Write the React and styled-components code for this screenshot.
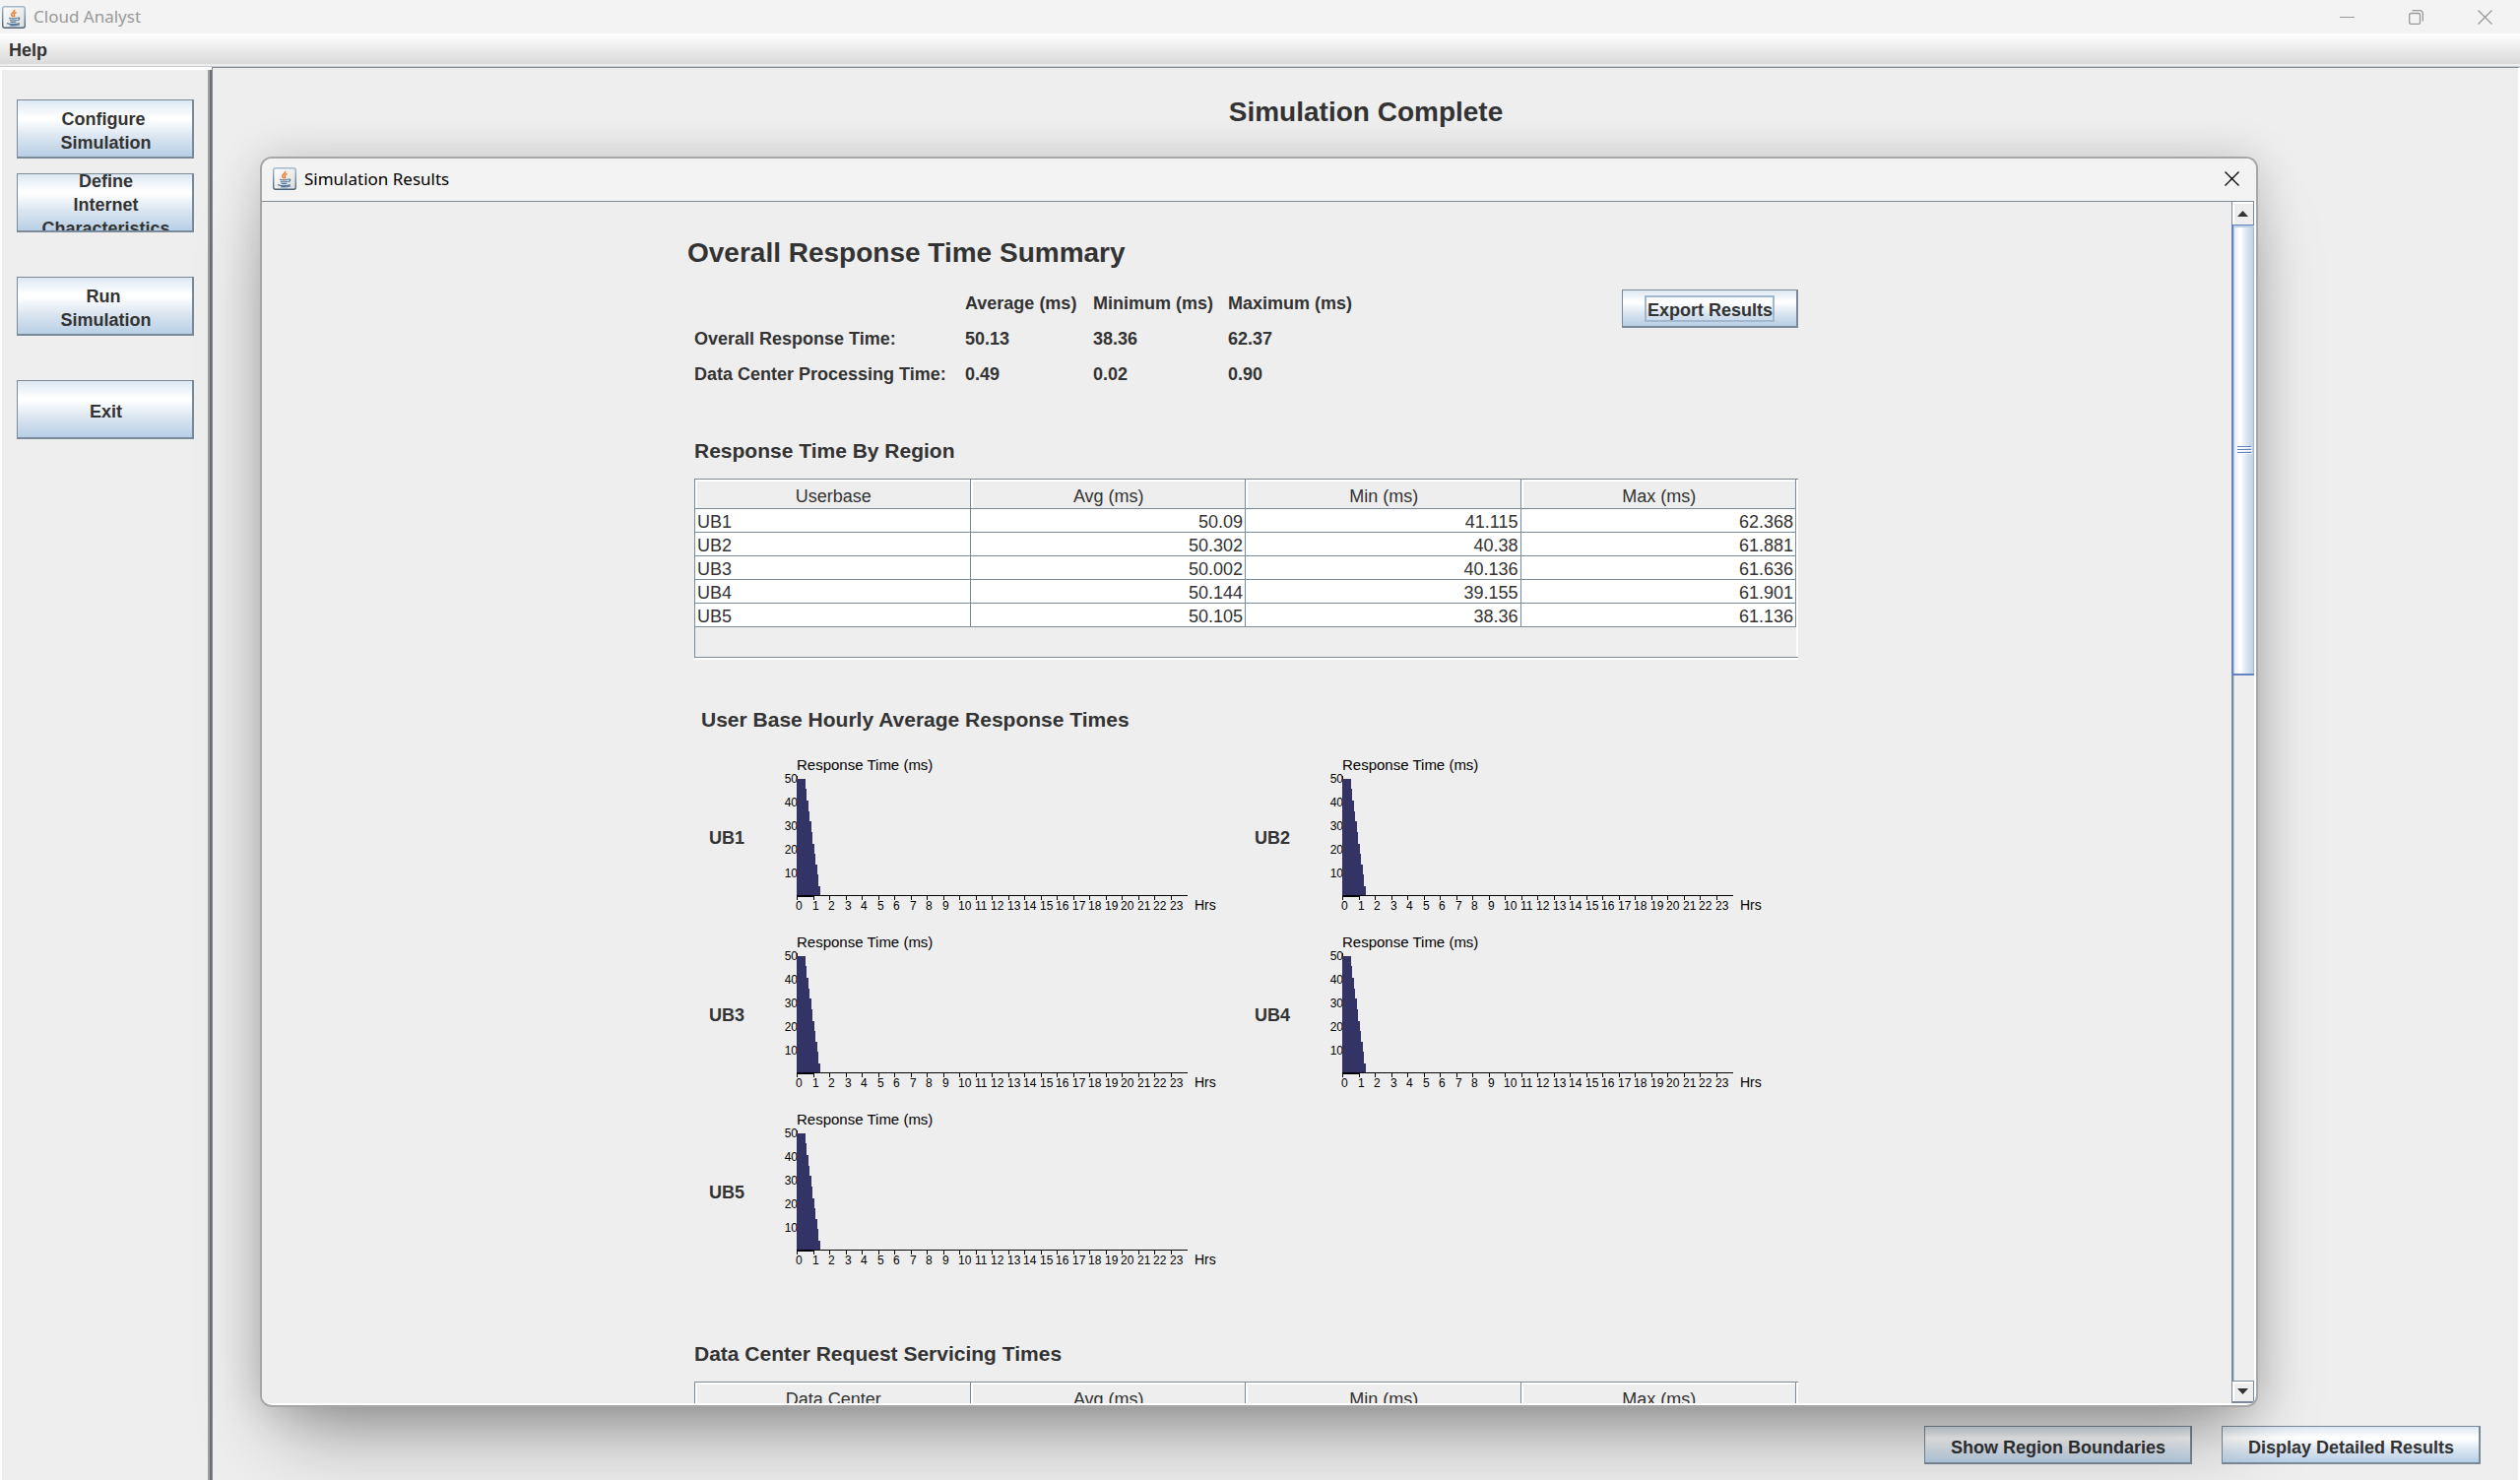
import React from "react";
import styled, { createGlobalStyle } from "styled-components";

const LINE = "#7a8a99";
const FACE = "#eeeeee";
const INK = "#333333";
const steel = (dir) =>
  `linear-gradient(${dir}, #dde8f3 0%, #ffffff 30%, #ffffff 34%, #dbe6f1 64%, #b8cfe5 100%)`;

const GlobalStyle = createGlobalStyle`
  *, *::before, *::after { box-sizing: border-box; }
  body {
    margin: 0;
    background: ${FACE};
    color: ${INK};
    font: bold 18px/24px "Liberation Sans", Arial, sans-serif;
  }
  button { font: inherit; color: inherit; }
`;

const Frame = styled.div`
  height: 100vh;
  display: flex;
  flex-direction: column;
  overflow: hidden;
`;

const TitleBar = styled.header`
  height: ${(p) => p.$height}px;
  flex: none;
  display: flex;
  align-items: center;
  gap: 8px;
  padding: ${(p) => p.$padding};
  background: #f3f3f3;
  color: ${(p) => p.$color};
  font: 17px/24px "Noto Sans", "Open Sans", sans-serif;
`;

const TitleText = styled.span`
  flex: 1;
`;

const WindowControls = styled.div`
  display: flex;
  align-self: stretch;
`;

const ControlButton = styled.button`
  width: ${(p) => p.$width}px;
  padding: 0;
  border: 0;
  background: none;
  display: flex;
  align-items: center;
  justify-content: center;
`;

const MenuBar = styled.nav`
  height: 34px;
  flex: none;
  display: flex;
  border-bottom: 1px solid #cccccc;
  background: linear-gradient(#ffffff, #dadada) top / 100% 31px no-repeat ${FACE};
`;

const MenuItem = styled.button`
  height: 31px;
  padding: 2px 9px 0;
  border: 0;
  background: none;
`;

const Workspace = styled.div`
  flex: 1;
  min-height: 0;
  display: flex;
`;

const Sidebar = styled.aside`
  width: 215px;
  flex: none;
  display: flex;
  flex-direction: column;
  gap: 45px;
  padding: 30px 14px 0 15px;
  border-top: 3px solid #ffffff;
  border-left: 2px solid #ffffff;
  box-shadow: inset -2px 0 #6f6f6f, inset -4px 0 #a0a0a0;
`;

const ButtonGroup = styled.div`
  display: flex;
  flex-direction: column;
  gap: 15px;
`;

const SteelButton = styled.button`
  display: flex;
  align-items: center;
  justify-content: center;
  overflow: hidden;
  padding: 4px 26px 0;
  border: solid ${LINE};
  border-width: 1px 2px 2px 1px;
  background: ${steel("to bottom")};
  text-align: center;
  white-space: pre;
`;

const SideButton = styled(SteelButton)`
  width: 180px;
  height: 60px;
  padding: 4px 0 0 2px;
`;

const ActionButton = styled(SteelButton)`
  height: 39px;
  padding: 5px 25px 0 26px;
`;

const ExportButton = styled(SteelButton)`
  height: 39px;
  margin-top: 4px;
  padding: 0 22px;
`;

const FocusRing = styled.span`
  padding: 4px 0 0 1px;
  border: 2px solid #a3b8cc;
  line-height: 19px;
`;

const Main = styled.main`
  flex: 1;
  min-width: 0;
  display: flex;
  flex-direction: column;
  justify-content: space-between;
  border-top: 1px solid ${LINE};
  border-left: 1px solid ${LINE};
  border-right: 2px solid #ffffff;
`;

const Heading = styled.h1`
  margin: 0;
  padding-left: 1px;
  font-size: 28px;
  line-height: 34px;
`;

const StatusHeading = styled(Heading)`
  padding-top: 28px;
  text-align: center;
`;

const Actions = styled.div`
  display: flex;
  justify-content: flex-end;
  gap: 30px;
  padding: 0 38px 16px;
`;

/* The results dialog floats over the main window. */
const Dialog = styled.section`
  position: absolute;
  inset: 159px 266px 74px 264px;
  display: flex;
  flex-direction: column;
  overflow: hidden;
  border: 2px solid #a6a6a6;
  border-radius: 12px;
  background: #ffffff;
  box-shadow: 0 0 44px rgba(0, 0, 0, 0.16), 0 44px 76px -22px rgba(0, 0, 0, 0.38);
`;

const ScrollPane = styled.div`
  flex: 1;
  min-height: 0;
  display: flex;
  margin: 0 2px 2px 0;
  border-top: 1px solid ${LINE};
`;

const Viewport = styled.div`
  flex: 1;
  min-width: 0;
  overflow: hidden;
  background: ${FACE};
`;

const Report = styled.div`
  width: 1138px;
  max-width: 100%;
  margin: 0 auto;
  padding-top: 35px;
`;

const ReportBody = styled.div`
  display: flex;
  flex-direction: column;
  gap: 48px;
  padding: 16px 9px 0 8px;
`;

const SummaryRow = styled.div`
  display: flex;
  justify-content: space-between;
  align-items: flex-start;
`;

const SummaryTable = styled.table`
  border-collapse: collapse;
  table-layout: fixed;
  width: 680px;
  line-height: 36px;
  text-align: left;

  th, td { padding: 0; font-weight: bold; }
  col:nth-child(1) { width: 275px; }
  col:nth-child(2) { width: 130px; }
  col:nth-child(3) { width: 137px; }
`;

const SectionHeading = styled.h2`
  margin: 0;
  font-size: 21px;
  line-height: 24px;
`;

const TableBox = styled.div`
  height: 182px;
  margin: 16px 0 3px;
  padding-right: 2px;
  border: solid ${LINE};
  border-width: 1px 0 1px 1px;
  box-shadow: 0 2px #ffffff, inset -2px 0 #ffffff;
`;

const DataTable = styled.table`
  width: 100%;
  table-layout: fixed;
  border-spacing: 0;
  font-weight: normal;

  th, td {
    border: solid ${LINE};
    border-width: 0 1px 1px 0;
  }
  th {
    height: 30px;
    padding: 5px 0 0 2px;
    font-weight: normal;
    line-height: 24px;
    box-shadow: inset 2px 2px #ffffff;
    background: ${FACE};
  }
  td {
    height: 24px;
    padding: 3px 2px 0;
    line-height: 20px;
    text-align: right;
    background: #ffffff;
  }
  td:first-child { text-align: left; }
`;

const ChartSection = styled.section`
  padding-left: 7px;
`;

const ChartGrid = styled.div`
  display: grid;
  grid-template-columns: repeat(2, 554px);
  grid-auto-rows: 180px;
  padding: 18px 0 14px;
`;

const ChartCell = styled.figure`
  margin: 0;
  padding-left: 8px;
  display: grid;
  grid-template-columns: 70px 1fr;
  align-items: center;
`;

const ChartSvg = styled.svg`
  display: block;
  overflow: visible;
  font: 12px "Liberation Sans", Arial, sans-serif;
  fill: #000000;
`;

const ScrollBar = styled.div`
  width: 23px;
  flex: none;
  display: flex;
  flex-direction: column;
  background: ${FACE};
  box-shadow: inset 2px 0 ${LINE}, inset 3px 0 #b8cfe5;
`;

const ScrollButton = styled.button`
  height: 23px;
  flex: none;
  display: flex;
  align-items: center;
  justify-content: center;
  padding: 0;
  border: solid ${LINE};
  border-width: ${(p) => (p.$end ? "1px 1px 2px" : "0 1px")};
  background: ${FACE};
  box-shadow: inset 2px 2px #ffffff;
`;

const Track = styled.div`
  flex: 1;
`;

const Thumb = styled.div`
  height: 39%;
  display: flex;
  flex-direction: column;
  align-items: center;
  justify-content: center;
  gap: 2px;
  border: solid #6382bf;
  border-width: 1px 0 2px 2px;
  background: ${steel("to right")};
  box-shadow: inset 1px 2px #b8cfe5, inset -1px 0 #a3b8cc;
`;

const Grip = styled.span`
  width: 14px;
  height: 1px;
  background: #6382bf;
  box-shadow: 1px 1px #ffffff;
`;

function JavaIcon() {
  return (
    <svg width="24" height="23" viewBox="0 0 24 23" fill="none" aria-hidden="true">
      <defs>
        <linearGradient id="tile" x1="0" y1="0" x2="1" y2="1">
          <stop offset="0" stopColor="#ffffff" />
          <stop offset="1" stopColor="#dcdcdc" />
        </linearGradient>
        <linearGradient id="rim" x1="0" y1="0" x2="0" y2="1">
          <stop offset="0" stopColor="#a3b9cc" />
          <stop offset="1" stopColor="#4a6378" />
        </linearGradient>
      </defs>
      <rect x="0.7" y="0.7" width="22.6" height="21.6" rx="2" fill="url(#tile)" stroke="url(#rim)" strokeWidth="1.4" />
      <path d="M12.6 3.8c1 2-3.4 3.2-2.9 5.2.2.9 1.3 1.5 1.5 2.4M14.6 6.4c-2.2.8-3 1.9-2.2 3 .5.7.4 1.3-.2 1.9" stroke="#ee8130" strokeWidth="1.6" />
      <path d="M7 12.2c2.6.9 6.2.9 8.8-.2M7.8 14.2c2.2.8 5 .8 7.2 0M8.4 16c1.8.7 4.2.7 6 0M16 12.2c2.2-.7 2.7 1.5-.4 2.7M5 17.6c2.2 1.5 10.4 1.5 12.8-.1M8 19.6c3.4.6 7.4.3 10-.9" stroke="#557a9b" strokeWidth="1.2" />
    </svg>
  );
}

function CloseIcon() {
  return (
    <svg width="15" height="15" viewBox="0 0 15 15" stroke="currentColor" strokeWidth="1.3" aria-hidden="true">
      <path d="M0.5 0.5l14 14M14.5 0.5l-14 14" />
    </svg>
  );
}

const TICK = 16.5;
const HOURS = Array.from({ length: 24 }, (_, h) => h);
const LEVELS = [50, 40, 30, 20, 10];
const STEPS = [
  [9, 10], [10, 22], [12, 33], [13, 43], [15, 54], [16, 66],
  [18, 76], [19, 87], [21, 97], [22, 109], [24, 118],
];
const AREA = `M0 0${STEPS.map(([x, y]) => `H${x}V${y}`).join("")}H0Z`;

function ResponseChart({ name }) {
  return (
    <ChartCell>
      <figcaption>{name}</figcaption>
      <ChartSvg width="440" height="180" viewBox="0 0 440 180">
        <text x="19" y="21" fontSize="15">Response Time (ms)</text>
        {LEVELS.map((v, i) => (
          <text key={v} x="20" y={34 + i * 24} textAnchor="end">{v}</text>
        ))}
        <g shapeRendering="crispEdges">
          <rect x="19" y="27" width="1" height="121" />
          <path d={AREA} transform="translate(19 30)" fill="#333366" />
          <rect x="19" y="148" width="397" height="1" />
          <rect x="19" y="149" width="17" height="1" />
          {HOURS.map((h) => (
            <rect key={h} x={19 + Math.round(h * TICK)} y="148" width="1" height="5" />
          ))}
        </g>
        {HOURS.map((h) => (
          <text key={h} x={18 + Math.round(h * TICK)} y="163">{h}</text>
        ))}
        <text x="423" y="163" fontSize="14">Hrs</text>
      </ChartSvg>
    </ChartCell>
  );
}

function ResultTable({ first, rows }) {
  return (
    <TableBox>
      <DataTable>
        <thead>
          <tr>
            {[first, "Avg (ms)", "Min (ms)", "Max (ms)"].map((h) => (
              <th key={h} scope="col">{h}</th>
            ))}
          </tr>
        </thead>
        <tbody>
          {rows.map((row) => (
            <tr key={row[0]}>
              {row.map((cell, i) => <td key={i}>{cell}</td>)}
            </tr>
          ))}
        </tbody>
      </DataTable>
    </TableBox>
  );
}

const REGION_ROWS = [
  ["UB1", "50.09", "41.115", "62.368"],
  ["UB2", "50.302", "40.38", "61.881"],
  ["UB3", "50.002", "40.136", "61.636"],
  ["UB4", "50.144", "39.155", "61.901"],
  ["UB5", "50.105", "38.36", "61.136"],
];

const SUMMARY_ROWS = [
  ["Overall Response Time:", "50.13", "38.36", "62.37"],
  ["Data Center Processing Time:", "0.49", "0.02", "0.90"],
];

export default function App() {
  return (
    <Frame>
      <GlobalStyle />
      <TitleBar $height={34} $padding="0 1px 0 2px" $color="#999999">
        <JavaIcon />
        <TitleText>Cloud Analyst</TitleText>
        <WindowControls>
          <ControlButton $width={70} aria-label="Minimize">
            <svg width="15" height="15" viewBox="0 0 15 15" fill="currentColor"><rect y="7" width="15" height="1" /></svg>
          </ControlButton>
          <ControlButton $width={70} aria-label="Restore">
            <svg width="15" height="15" viewBox="0 0 15 15" fill="none" stroke="currentColor" strokeWidth="1.3">
              <rect x="0.7" y="3.5" width="10.8" height="10.8" rx="1.6" />
              <path d="M3.5 0.7H11.3a3 3 0 0 1 3 3V11.5" />
            </svg>
          </ControlButton>
          <ControlButton $width={70} aria-label="Close"><CloseIcon /></ControlButton>
        </WindowControls>
      </TitleBar>
      <MenuBar><MenuItem>Help</MenuItem></MenuBar>

      <Workspace>
        <Sidebar>
          <ButtonGroup>
            <SideButton>{"Configure\u00a0\nSimulation"}</SideButton>
            <SideButton>{"Define\nInternet\nCharacteristics"}</SideButton>
          </ButtonGroup>
          <SideButton>{"Run\u00a0\nSimulation"}</SideButton>
          <SideButton>Exit</SideButton>
        </Sidebar>
        <Main>
          <StatusHeading>Simulation Complete</StatusHeading>
          <Actions>
            <ActionButton>Show Region Boundaries</ActionButton>
            <ActionButton>Display Detailed Results</ActionButton>
          </Actions>
        </Main>
      </Workspace>

      <Dialog role="dialog" aria-label="Simulation Results">
        <TitleBar $height={43} $padding="0 0 2px 11px" $color="#000000">
          <JavaIcon />
          <TitleText>Simulation Results</TitleText>
          <ControlButton $width={49} aria-label="Close"><CloseIcon /></ControlButton>
        </TitleBar>
        <ScrollPane>
          <Viewport>
            <Report>
              <Heading as="h2">Overall Response Time Summary</Heading>
              <ReportBody>
                <SummaryRow>
                  <SummaryTable>
                    <colgroup><col /><col /><col /><col /></colgroup>
                    <thead>
                      <tr>
                        <td />
                        <th scope="col">Average (ms)</th>
                        <th scope="col">Minimum (ms)</th>
                        <th scope="col">Maximum (ms)</th>
                      </tr>
                    </thead>
                    <tbody>
                      {SUMMARY_ROWS.map(([label, ...values]) => (
                        <tr key={label}>
                          <th scope="row">{label}</th>
                          {values.map((v) => <td key={v}>{v}</td>)}
                        </tr>
                      ))}
                    </tbody>
                  </SummaryTable>
                  <ExportButton><FocusRing>Export Results</FocusRing></ExportButton>
                </SummaryRow>

                <section>
                  <SectionHeading>Response Time By Region</SectionHeading>
                  <ResultTable first="Userbase" rows={REGION_ROWS} />
                </section>

                <ChartSection>
                  <SectionHeading>User Base Hourly Average Response Times</SectionHeading>
                  <ChartGrid>
                    {REGION_ROWS.map(([name]) => <ResponseChart key={name} name={name} />)}
                  </ChartGrid>
                </ChartSection>

                <section>
                  <SectionHeading>Data Center Request Servicing Times</SectionHeading>
                  <ResultTable first="Data Center" rows={[]} />
                </section>
              </ReportBody>
            </Report>
          </Viewport>
          <ScrollBar>
            <ScrollButton aria-label="Scroll up">
              <svg width="11" height="6" viewBox="0 0 11 6" fill={INK}><path d="M5.5 0L11 6H0Z" /></svg>
            </ScrollButton>
            <Track>
              <Thumb><Grip /><Grip /><Grip /></Thumb>
            </Track>
            <ScrollButton $end aria-label="Scroll down">
              <svg width="11" height="6" viewBox="0 0 11 6" fill={INK}><path d="M0 0H11L5.5 6Z" /></svg>
            </ScrollButton>
          </ScrollBar>
        </ScrollPane>
      </Dialog>
    </Frame>
  );
}
